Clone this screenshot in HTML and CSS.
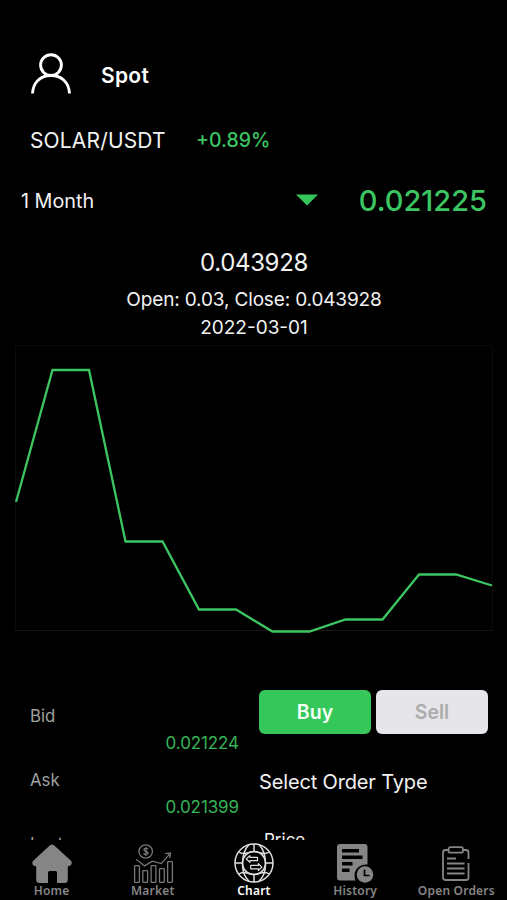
FILE: index.html
```html
<!DOCTYPE html>
<html lang="en">
<head>
<meta charset="utf-8">
<title>Spot</title>
<link rel="stylesheet" href="styles.css">
</head>
<body>
<div class="app">
  <main class="content">
    <header class="header">
      <svg class="avatar" viewBox="0 0 42 42" fill="none" stroke="#fff" stroke-width="2.9"><circle cx="21" cy="12.1" r="10.4"/><path d="M2.5 40.5C3 29 10.800 22.500 21 22.500S39 29 39.500 40.500"/></svg>
      <span class="title">Spot</span>
    </header>
    <div class="pair"><span class="symbol">SOLAR/USDT</span><span class="change">+0.89%</span></div>
    <div class="range">
      <span class="period">1 Month</span>
      <svg class="caret" viewBox="0 0 22 12"><path d="M0 .5h22L11 11.500z" fill="#35c759"/></svg>
      <span class="last">0.021225</span>
    </div>
    <section class="quote">
      <div class="value">0.043928</div>
      <div class="ohlc">Open: 0.03, Close: 0.043928</div>
      <div class="date">2022-03-01</div>
    </section>
    <svg class="chart" viewBox="0 0 480 290" fill="none">
      <rect x="1.500" y="1.500" width="477" height="285" stroke="#0b0b0b"/>
      <path d="M1 286.500h478" stroke="#151515"/>
      <path d="M2 158L38.500 26H75L111.500 197.500H148.500L185 265.500H222L258.500 287.500H295.500L331.500 275.500H368.500L405 230.500H442L478 241.500" stroke="#3cc662" stroke-width="2.3"/>
    </svg>
    <div class="trade">
      <div class="book">
        <div class="label">Bid</div><div class="amount">0.021224</div>
        <div class="label">Ask</div><div class="amount">0.021399</div>
        <div class="label bright">Last</div>
      </div>
      <div class="order">
        <div class="buttons"><button class="btn buy">Buy</button><button class="btn sell">Sell</button></div>
        <div class="select">Select Order Type</div>
        <div class="price">Price</div>
      </div>
    </div>
  </main>
  <nav class="tabs">
    <a class="tab">
      <svg class="icon" viewBox="0 0 42 42" fill="#858585"><path d="M21 3.400Q22 3.400 23 4.300L40 19.800Q41.600 21.500 40.300 23.500Q39 25.600 36.800 25.200V38.500Q36.800 42 33.500 42H26V31.500Q26 30 24.500 30H18.500Q17 30 17 31.500V42H8.500Q5.200 42 5.200 38.500V25.200Q2.700 25.600 1.600 23.500Q.5 21.500 2.200 19.800L19 4.300Q20 3.400 21 3.400z"/></svg>
      <span class="name">Home</span>
    </a>
    <a class="tab">
      <svg class="icon" viewBox="0 0 42 42" fill="none" stroke="#777" stroke-width="1.300"><circle cx="13.700" cy="10.500" r="6.700"/><path d="M15.900 8.300c-.6-1.200-4-1.300-4 .6 0 2.100 4.200 1 4.200 3.100 0 1.900-3.700 1.800-4.400.4M13.900 6v9M4 18.500l3.400 2.200 5.100 4.200 7.800-4.800 9 2.500 8-9.300M33.200 12.600l5.200-.6-.6 5.200"/><rect x="2.600" y="24.600" width="4.800" height="16.800" rx=".8"/><rect x="10.800" y="29.600" width="4.800" height="11.800" rx=".8"/><rect x="19.100" y="24.600" width="4.800" height="16.800" rx=".8"/><rect x="27.500" y="27.600" width="4.800" height="13.800" rx=".8"/><rect x="35.600" y="20.600" width="4.800" height="20.800" rx=".8"/></svg>
      <span class="name">Market</span>
    </a>
    <a class="tab active">
      <svg class="icon" viewBox="0 0 42 42" fill="none" stroke="#dedede" stroke-width="1.500"><circle cx="21" cy="22" r="19"/><circle cx="21" cy="22" r="11.500"/><path d="M21 3V10.500M21 33.500v7.500M2 22h7.500M32.500 22H40M16 3.800C12 7.500 9.800 12.500 9.500 22S12 36.500 16 40.200M26 3.800C30 7.500 32.200 12.500 32.500 22S30 36.500 26 40.200M6 11C11 15 15.500 10.500 21 10.500s10 4.500 15 .5M6 33C11 29 15.500 33.500 21 33.500s10-4.500 15-.5"/><path stroke-width="1.200" stroke-linejoin="round" d="M13.300 18l3.500-3.400v1.700h7.700v3.400h-7.700v1.700zM28.900 26.100l-3.500-3.400v1.700h-7.700v3.400h7.700v1.700z"/></svg>
      <span class="name">Chart</span>
    </a>
    <a class="tab">
      <svg class="icon" viewBox="0 0 42 42"><path fill="#858585" d="M6 3H30.500Q33.500 3 33.500 6V23.500C26 23 21 28 20.500 33.500Q20.300 37 21.500 39.500H6Q3 39.500 3 36.500V6Q3 3 6 3z"/><path stroke="#000" stroke-width="3.400" d="M8 9.700h17M8 16.300h20.500M8 22.800h10.500M8 29.200h7.500"/><circle cx="31" cy="33.500" r="8.300" fill="#858585"/><path d="M30.500 28.500v6h5" fill="none" stroke="#000" stroke-width="1.700"/></svg>
      <span class="name">History</span>
    </a>
    <a class="tab">
      <svg class="icon" viewBox="0 0 42 42" fill="none" stroke="#858585" stroke-width="1.800"><path d="M13.500 9H10.500Q8 9 8 11.500V36.500Q8 39 10.500 39H31Q33.500 39 33.500 36.500V22M33.500 18V11.500Q33.500 9 31 9H28"/><rect x="13.500" y="6.200" width="14.500" height="5.500" rx="2"/><path d="M12 17.500h9M12 22.500h17.500M12 27.500h17.500M12 32.500h17.500"/></svg>
      <span class="name">Open Orders</span>
    </a>
  </nav>
</div>
</body>
</html>
```
FILE: styles.css
```css
* { box-sizing: border-box; }
body { margin: 0; background: #000; color: #f2f2f2; font-family: Inter, "Liberation Sans", sans-serif; }
.app { width: 507px; height: 900px; overflow: hidden; display: flex; flex-direction: column; white-space: nowrap; }
.content { height: 840px; overflow: hidden; }
.header { display: flex; align-items: center; height: 49px; margin-top: 51px; padding-left: 30px; }
.avatar { width: 42px; height: 42px; margin-top: -4px; }
.title { margin-left: 29px; font-size: 21px; font-weight: 600; color: #fff; letter-spacing: .3px; }
.pair { display: flex; align-items: center; height: 40px; margin-top: 20px; padding-left: 30px; }
.symbol { width: 166px; font-size: 21px; letter-spacing: .15px; }
.change { font-size: 19.5px; font-weight: 500; color: #3cc662; }
.range { display: flex; align-items: center; height: 40px; margin-top: 21px; padding: 0 20px 0 21px; }
.period { width: 275px; font-size: 19.800px; }
.caret { width: 22px; height: 12px; margin-top: -2px; }
.last { margin: -2px 0 0 auto; font-size: 29px; font-weight: 500; color: #3cc662; }
.quote { text-align: center; padding-top: 24px; margin-left: 1px; }
.value { height: 36px; line-height: 36px; font-size: 24px; letter-spacing: -.35px; }
.ohlc { height: 37px; line-height: 37px; font-size: 19px; letter-spacing: -.15px; }
.date { height: 20px; line-height: 20px; font-size: 19px; }
.chart { display: block; width: 480px; height: 290px; margin: 6px 0 0 14px; }
.trade { display: grid; grid-template-columns: 239px 229px; column-gap: 20px; padding-top: 56px; }
.book { padding: 10px 0 0 30px; }
.label { height: 32px; line-height: 32px; font-size: 16.800px; color: #a0a0a0; }
.amount { height: 31.500px; line-height: 22px; font-size: 17px; letter-spacing: -.1px; color: #35b558; text-align: right; }
.bright { line-height: 35px; }
.buttons { display: flex; gap: 5px; }
.btn { flex: 1; height: 44px; padding: 0; border: 0; border-radius: 6px; font: 600 19.5px Inter, sans-serif; }
.buy { background: #35c759; color: #f4fff6; }
.sell { background: #e5e5ea; color: #acacac; }
.select { margin-top: 28px; height: 41px; line-height: 41px; font-size: 20px; letter-spacing: -.15px; }
.price { padding: 23px 0 0 5px; font-size: 17px; line-height: 29px; }
.tabs { display: grid; grid-template-columns: repeat(5, 101.200px); height: 60px; padding-left: 1px; background: #000; }
.tab { display: flex; flex-direction: column; align-items: center; color: #858585; }
.icon { width: 42px; height: 42px; margin-top: 1px; }
.name { font: 600 12px/16px "Noto Sans", sans-serif; letter-spacing: .2px; }
.active { color: #fff; }
```
